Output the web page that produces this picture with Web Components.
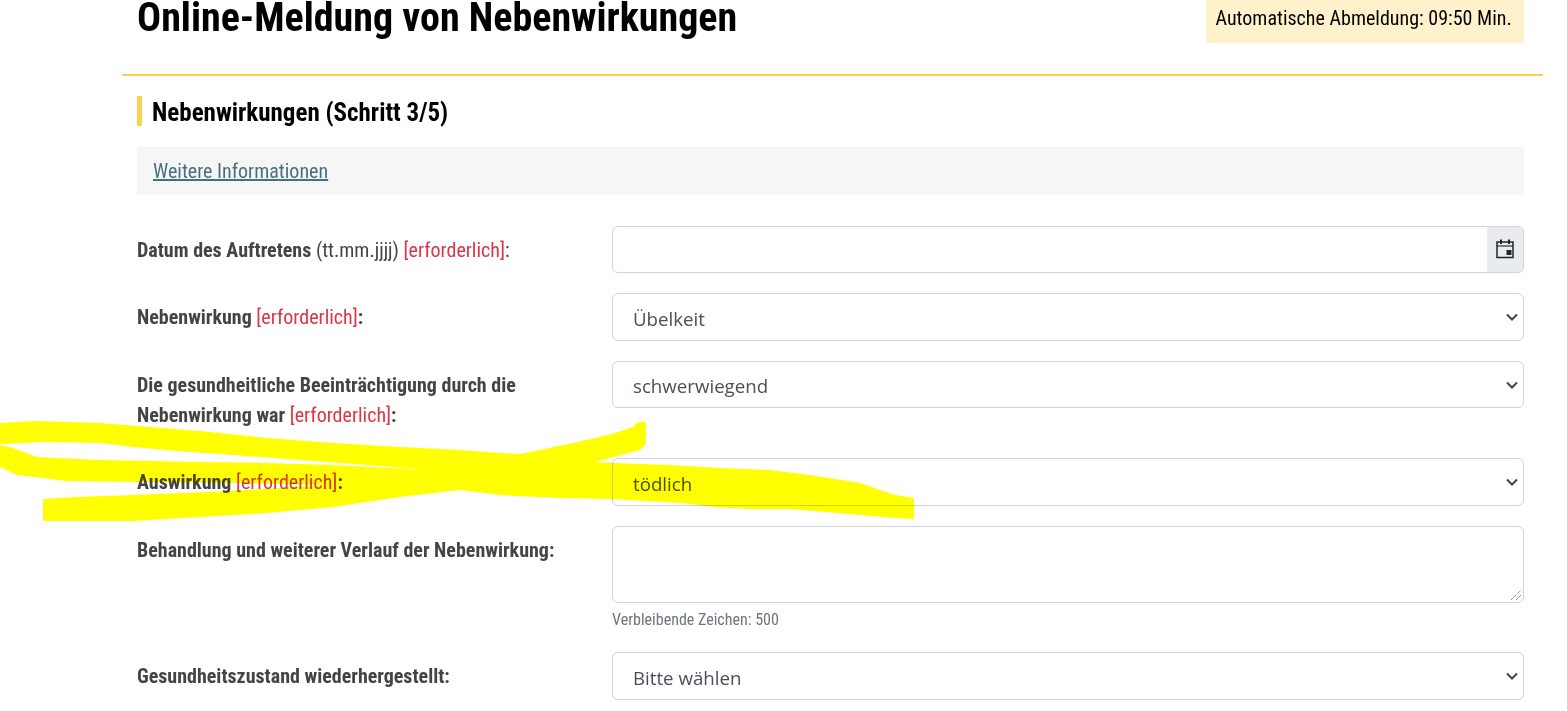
<!DOCTYPE html>
<html lang="de"><head><meta charset="utf-8"><title>Online-Meldung von Nebenwirkungen</title>
<style>
html,body{margin:0;padding:0;background:#fff;overflow:hidden;height:711px}
body{font-family:"Roboto Condensed",Roboto,sans-serif;color:#444;position:relative}
</style></head><body>
<template id="t-page"><style>
:host{display:block;box-sizing:border-box;margin:-5px 24px 0 122px}
</style><slot></slot></template>

<template id="t-header"><style>
:host{display:flex;justify-content:space-between;align-items:flex-start;box-sizing:border-box;height:81px;padding:0 19px 0 15px;border-bottom:2px solid #ffd04f}
h1{margin:0;font:700 40px/46px Roboto,sans-serif;font-stretch:condensed;color:#000}
.timer{background:#fff1cc;color:#000;font:400 20px/22px Roboto,sans-serif;font-stretch:condensed;padding:12px 12.5px 16px 9.5px;width:296px;height:20px;box-sizing:content-box;white-space:nowrap}
</style><h1><slot name="title"></slot></h1><div class="timer"><slot name="timer"></slot></div></template>

<template id="t-section"><style>
:host{display:block;padding:20px 19px 0 15px}
h2{margin:0;border-left:5px solid #ffd04f;padding-left:10px;height:30px;font:700 25px/34px Roboto,sans-serif;font-stretch:condensed;color:#000}
.info{margin-top:21px;background:#f6f6f6;height:48px;padding:0 16px;display:flex;align-items:center;font:400 20px/24px Roboto,sans-serif;font-stretch:condensed}
a{color:#47707f;text-decoration:underline}
.rows{margin-top:31px;display:flex;flex-direction:column}
</style><h2><slot name="heading"></slot></h2><div class="info"><a href="#"><slot name="info"></slot></a></div><div class="rows"><slot></slot></div></template>

<template id="t-row"><style>
:host{display:grid;grid-template-columns:475px 912px;margin-bottom:var(--gap,20px)}
.label{font:400 20px/30px Roboto,sans-serif;font-stretch:condensed;color:#444;padding-top:9px}
.field{min-width:0}
</style><div class="label"><slot name="label"></slot></div><div class="field"><slot></slot></div></template>

<template id="t-select"><style>
:host{display:flex;box-sizing:border-box;height:var(--h,48px);border:1px solid #ced4da;border-radius:6px;background:#fff;position:relative;font:400 18.7px/1 "Open Sans",sans-serif;color:#495057;padding:4px 0 0 20px;align-items:center}
svg{position:absolute;right:5px;top:50%;margin-top:-4px}
</style><span><slot></slot></span><svg width="12" height="8" viewBox="0 0 12 8"><path d="M1 1.5l5 5 5-5" fill="none" stroke="#444" stroke-width="2"/></svg></template>

<template id="t-date"><style>
:host{display:flex;box-sizing:border-box;height:47px;border:1px solid #ced4da;border-radius:6px;background:#fff;overflow:hidden}
.fill{flex:1}
.btn{width:36px;background:#e9ecef;display:flex;align-items:center;justify-content:center}
svg{display:block;margin-top:-2px}
</style><div class="fill"></div><div class="btn"><svg width="18" height="20" viewBox="0 0 18 20"><path d="M1 3h16v15.500H1z" fill="none" stroke="#212529" stroke-width="1.5"/><path d="M1 7h16" stroke="#212529" stroke-opacity=".75" stroke-width="1.5"/><path d="M5 .5v4.500M13 .5v4.500" stroke="#212529" stroke-width="2"/><path d="M10.500 11h5v5h-5z" fill="#212529"/></svg></div></template>

<template id="t-text"><style>
:host{display:block}
.box{box-sizing:border-box;height:77px;border:1px solid #ced4da;border-radius:6px;background:#fff;position:relative}
svg{position:absolute;right:1px;bottom:1px}
.hint{font:400 16px/18px Roboto,sans-serif;font-stretch:condensed;color:#6c757d;margin-top:8px}
</style><div class="box"><svg width="12" height="12" viewBox="0 0 12 12"><path d="M1 11L11 1M6 11l5-5" stroke="#555" stroke-width="1" stroke-dasharray="1 1"/></svg></div><div class="hint"><slot></slot></div></template>

<template id="t-mark"><style>
:host{display:block;position:absolute;left:0;top:0;width:1567px;height:711px;pointer-events:none;mix-blend-mode:multiply}
svg{display:block}
</style><svg width="1567" height="711" viewBox="0 0 1567 711"><path fill="#ffff00" d="M0 423 L35 421 L100 423 L200 431 L267 438 L333 443 L400 447 L460 450 L500 453 L520 454 L540 450 L577 442 L612 434 L633 427 L638 422 L646 422 L646 444 L640 450 L625 454 L595 462 L612 463 L670 465 L720 468 L770 470 L810 475 L860 483 L895 495 L914 498 L914 519 L895 518 L850 514 L790 509 L750 509 L716 507 L680 503 L610 499 L560 498 L500 495 L460 490 L400 497 L333 507 L267 513 L133 521 L43 521 L43 499 L77 497 L133 495 L230 491 L330 485 L230 483 L137 482 L67 481 L43 478 L17 475 L0 467 L0 445 L10 447 L37 457 L100 460 L200 462 L267 463 L333 465 L427 470 L367 465 L300 460 L233 455 L177 451 L133 447 L100 443 L43 442 L0 444 Z"/></svg></template>

<mk-page>
<mk-header><span slot="title">Online-Meldung von Nebenwirkungen</span><span slot="timer">Automatische Abmeldung: 09:50 Min.</span></mk-header>
<mk-section>
<span slot="heading">Nebenwirkungen (Schritt 3/5)</span><span slot="info">Weitere Informationen</span>
<mk-row><span slot="label"><b>Datum des Auftretens</b> (tt.mm.jjjj) <span style="color:#dc3545">[erforderlich]</span>:</span><mk-date></mk-date></mk-row>
<mk-row><span slot="label"><b>Nebenwirkung</b> <span style="color:#dc3545">[erforderlich]</span><b>:</b></span><mk-select>Übelkeit</mk-select></mk-row>
<mk-row style="--gap:28px"><span slot="label"><b>Die gesundheitliche Beeinträchtigung durch die<br>Nebenwirkung war</b> <span style="color:#dc3545">[erforderlich]</span><b>:</b></span><mk-select style="--h:47px">schwerwiegend</mk-select></mk-row>
<mk-row><span slot="label"><b>Auswirkung</b> <span style="color:#dc3545">[erforderlich]</span><b>:</b></span><mk-select>tödlich</mk-select></mk-row>
<mk-row style="--gap:23px"><span slot="label"><b>Behandlung und weiterer Verlauf der Nebenwirkung:</b></span><mk-text>Verbleibende Zeichen: 500</mk-text></mk-row>
<mk-row><span slot="label"><b>Gesundheitszustand wiederhergestellt:</b></span><mk-select>Bitte wählen</mk-select></mk-row>
</mk-section>
</mk-page>
<mk-mark></mk-mark>
<script>
for (const n of ['page','header','section','row','select','date','text','mark']) {
  customElements.define('mk-'+n, class extends HTMLElement {
    constructor(){super();this.attachShadow({mode:'open'}).appendChild(document.getElementById('t-'+n).content.cloneNode(true));}
  });
}
</script>
</body></html>
